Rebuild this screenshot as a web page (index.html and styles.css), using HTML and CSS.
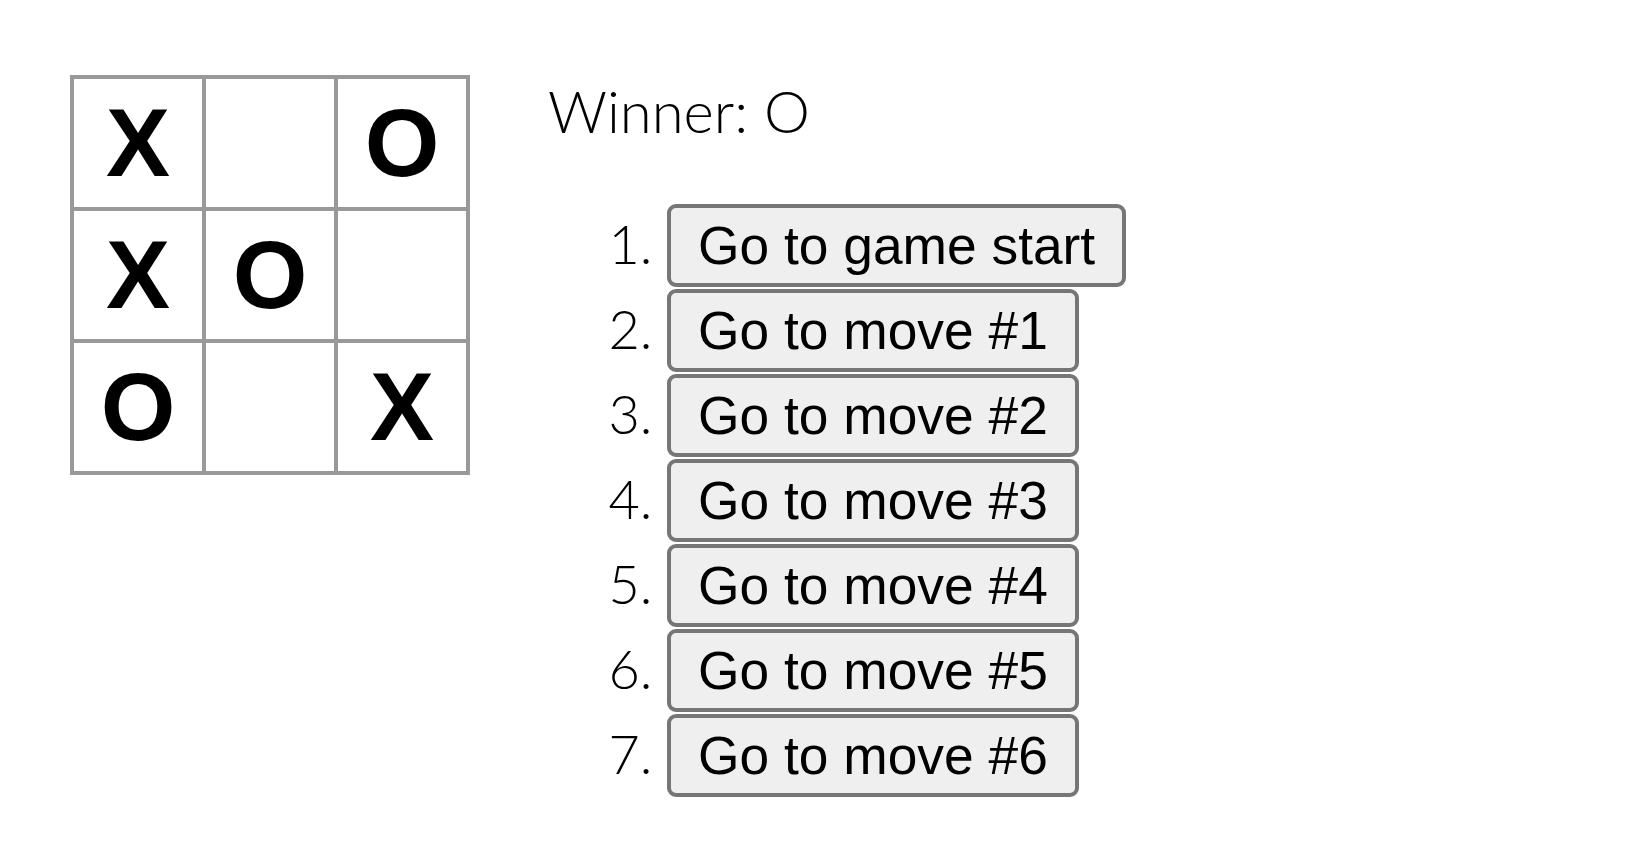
FILE: index.html
```html
<!DOCTYPE html>
<html lang="en">
<head>
    <meta charset="UTF-8">
    <meta name="viewport" content="width=device-width, initial-scale=1.0">
    <title>Tic-Tac-Toe</title>
    <link rel="stylesheet" href="styles.css">
</head>
<body>
    <div class="game">
        <div class="game-board">
            <div class="board">
                <button class="square">X</button>
                <button class="square"></button>
                <button class="square">O</button>
                <button class="square">X</button>
                <button class="square">O</button>
                <button class="square"></button>
                <button class="square">O</button>
                <button class="square"></button>
                <button class="square">X</button>
            </div>
        </div>

        <div class="game-info">
            <div class="status">Winner: O</div>
            <ol class="moves">
                <li><button class="move">Go to game start</button></li>
                <li><button class="move">Go to move #1</button></li>
                <li><button class="move">Go to move #2</button></li>
                <li><button class="move">Go to move #3</button></li>
                <li><button class="move">Go to move #4</button></li>
                <li><button class="move">Go to move #5</button></li>
                <li><button class="move">Go to move #6</button></li>
            </ol>
        </div>
    </div>
</body>
</html>
```

FILE: styles.css
```css
* {
    box-sizing: border-box;
}

body {
    margin: 0;
    padding: 0;
    background-color: #ffffff;
    color: #000000;
    font-family: 'Century Gothic', Lato, sans-serif;
    font-weight: 300;
}


.game {
    display: flex;
    flex-direction: row;
    align-items: flex-start;
    padding: 75px 0 0 70px;
}


.board {
    display: grid;
    grid-template-columns: repeat(3, 128px);
    grid-template-rows: repeat(3, 128px);
    gap: 4px;
    padding: 4px;
    background-color: #999;
}

.square {
    background: #fff;
    border: none;
    padding: 0;
    margin: 0;
    font-family: 'Liberation Sans', Arial, sans-serif;
    font-size: 96px;
    font-weight: bold;
    color: #000;
    line-height: 128px;
    text-align: center;
}


.game-info {
    margin-left: 78px;
}

.status {
    font-size: 58px;
    line-height: 72px;
    margin: 0;
}

.moves {
    margin: 57px 0 0 0;
    padding-left: 119px;
    font-size: 54px;
    line-height: 1;
}

.moves li {
    margin: 0;
}

.move {
    font-family: 'Liberation Sans', Arial, sans-serif;
    font-size: 53.33px;
    font-weight: normal;
    line-height: normal;
    color: #000;
    background-color: #efefef;
    border: 4px solid #767676;
    border-radius: 9px;
    padding: 7px 27px;
    margin: 0 0 2px 0;
    vertical-align: baseline;
}
```
